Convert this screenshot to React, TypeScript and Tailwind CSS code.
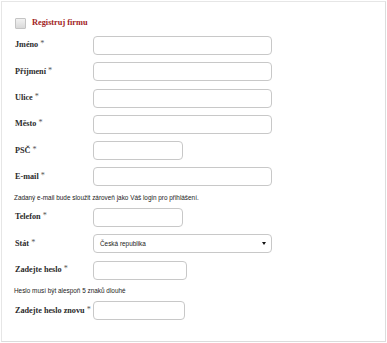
import React from 'react';

const labelFont = { fontFamily: '"Liberation Serif", "Times New Roman", serif' };
const smallFont = { fontFamily: '"Liberation Sans", Arial, sans-serif' };

interface FieldProps {
  label: string;
  width: string;
}

function Label({ text }: { text: string }) {
  return (
    <label className="w-[78px] shrink-0 text-[8.2px] font-bold text-[#2b2b2b] whitespace-nowrap leading-none" style={labelFont}>
      {text} <span className="font-normal text-[#555] relative -top-[1px]">*</span>
    </label>
  );
}

function Field({ label, width }: FieldProps) {
  return (
    <div className="flex items-center h-[19px]">
      <Label text={label} />
      <input
        type="text"
        className={`${width} h-[19px] border border-[#c8c8c8] rounded-[4px] bg-white focus:outline-none`}
      />
    </div>
  );
}

function Note({ text }: { text: string }) {
  return (
    <p className="h-[7px] text-[6.4px] leading-[7px] text-[#222] -ml-px whitespace-nowrap" style={smallFont}>
      {text}
    </p>
  );
}

export default function App() {
  return (
    <div className="w-[387px] h-[343px] bg-white pt-px pl-px">
      <div className="w-[385px] h-[341px] border border-[#e6e6e6] border-r-[#dcdcdc] border-b-[#dcdcdc] pl-[13px] pt-[16px]">
        {/* firma */}
        <div className="flex items-center gap-[6px] h-[11px] mb-[7px]">
          <span className="w-[11px] h-[11px] border border-[#c4c4c4] rounded-[1px] bg-gradient-to-b from-[#f2f2f2] to-[#d9d9d9]" />
          <span className="text-[8.3px] font-bold text-[#a11d1d] leading-none" style={labelFont}>
            Registruj firmu
          </span>
        </div>

        <div className="flex flex-col gap-[7.3px]">
          <Field label="Jméno" width="w-[179px]" />
          <Field label="Příjmení" width="w-[179px]" />
          <Field label="Ulice" width="w-[179px]" />
          <Field label="Město" width="w-[179px]" />
          <Field label="PSČ" width="w-[90px]" />
          <Field label="E-mail" width="w-[179px]" />
          <Note text="Zadaný e-mail bude sloužit zároveň jako Váš login pro přihlášení." />
          <Field label="Telefon" width="w-[90px]" />

          <div className="flex items-center h-[19px]">
            <Label text="Stát" />
            <div className="w-[179px] h-[19px] border border-[#c8c8c8] rounded-[4px] bg-white flex items-center justify-between pl-[6px] pr-[5px]">
              <span className="text-[6.4px] text-[#222] leading-none" style={smallFont}>Česká republika</span>
              <svg width="4" height="3" viewBox="0 0 4 3">
                <path d="M0 0h4L2 3z" fill="#111" />
              </svg>
            </div>
          </div>

          <Field label="Zadejte heslo" width="w-[94px]" />
          <Note text="Heslo musí být alespoň 5 znaků dlouhé" />
          <Field label="Zadejte heslo znovu" width="w-[92px]" />
        </div>
      </div>
    </div>
  );
}
